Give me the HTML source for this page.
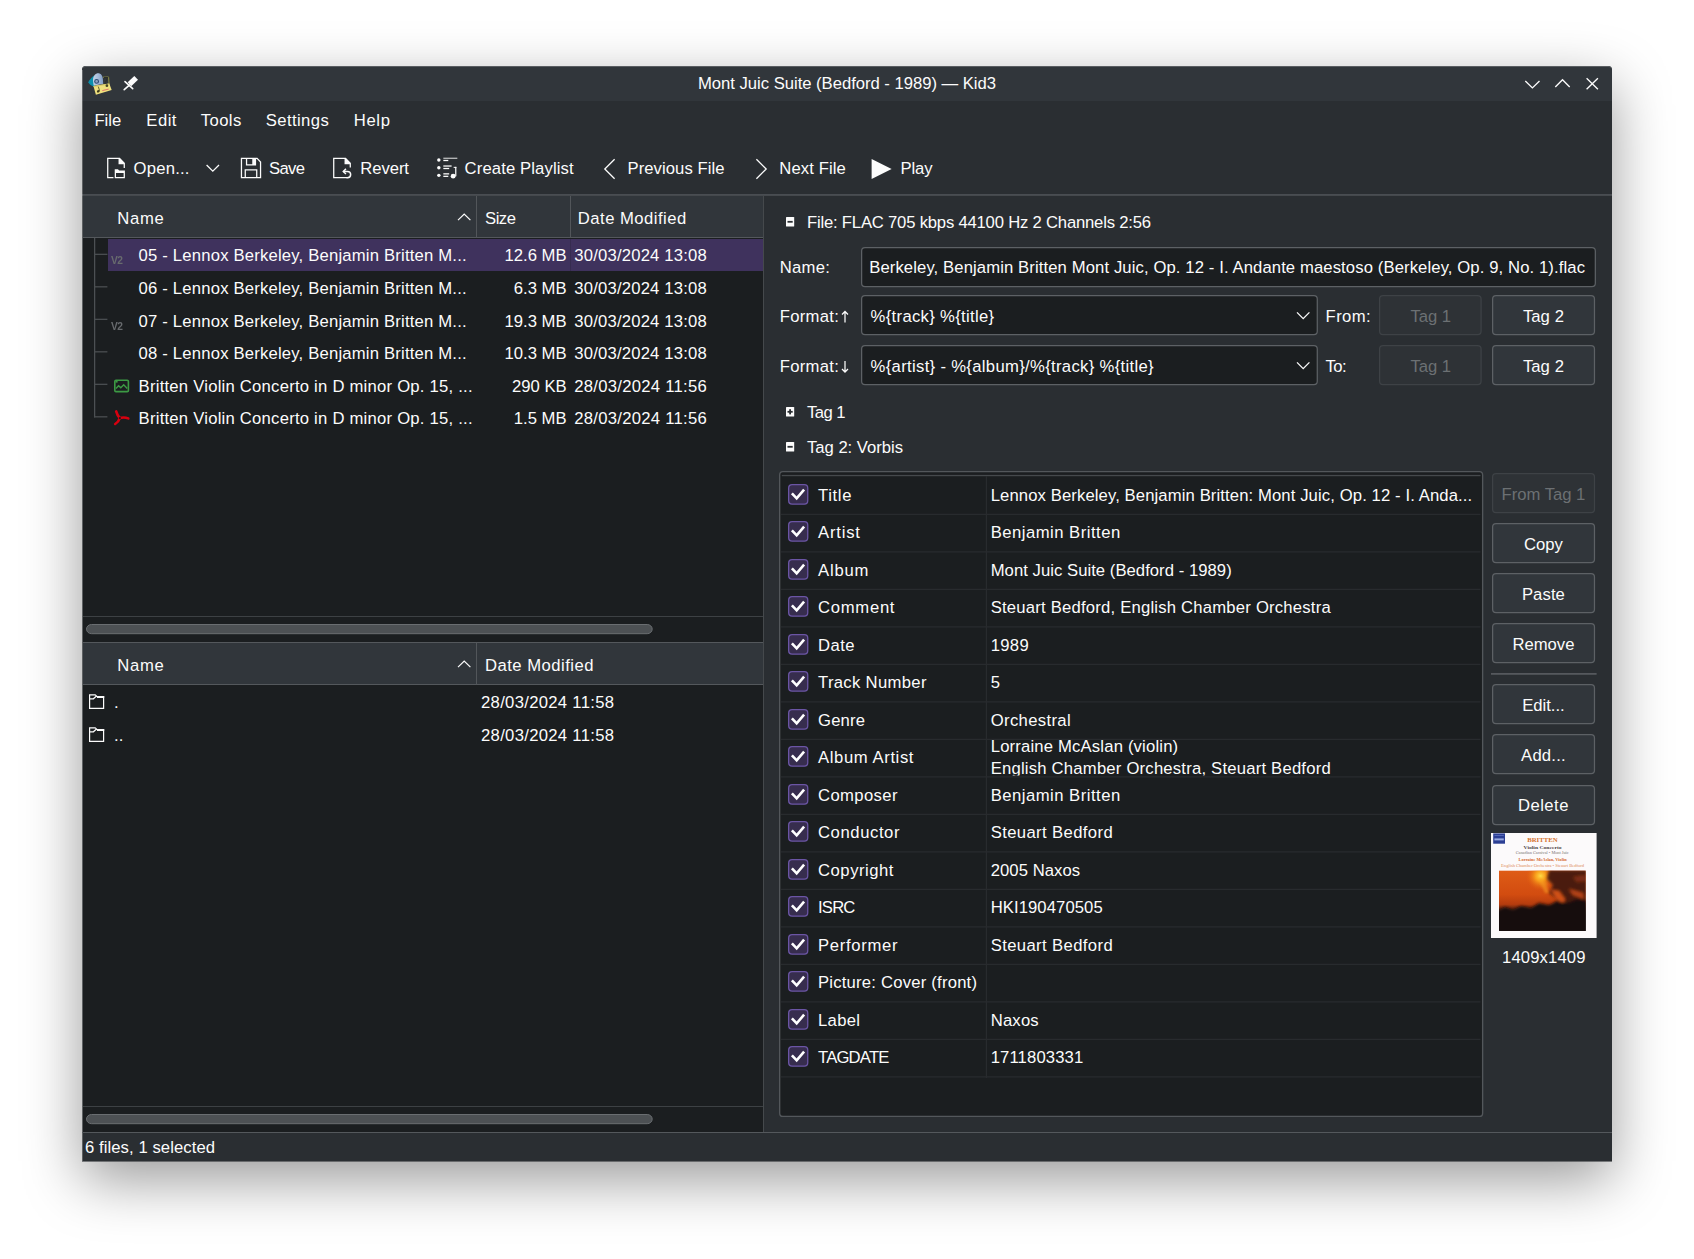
<!DOCTYPE html>
<html lang="en">
<head>
<meta charset="utf-8">
<title>Mont Juic Suite (Bedford - 1989) — Kid3</title>
<style>
*{box-sizing:border-box;margin:0;padding:0}
html,body{width:1694px;height:1259px;overflow:hidden;background:#fff}
body{font-family:"Liberation Sans",sans-serif;font-size:16.67px;color:#fcfcfc;position:relative;-webkit-font-smoothing:antialiased}
.abs{position:absolute}
.t{position:absolute;white-space:nowrap;line-height:20px;height:20px}
#win{position:absolute;left:82px;top:66px;width:1530px;height:1095px;background:#2a2e32;border-radius:4px 4px 0 0;box-shadow:0 19px 57px rgba(0,0,0,.4)}
#titlebar{position:absolute;left:0;top:0;width:1530px;height:35px;background:#31363b;border-radius:4px 4px 0 0}
#title{position:absolute;left:0;width:1530px;top:8px;text-align:center;line-height:20px}
.hline{position:absolute;height:1px;background:#52565a}
.vline{position:absolute;width:1px;background:#52565a}
.view{position:absolute;background:#1b1e20}
.hdr{position:absolute;background:#31363b;border-bottom:1px solid #54585c}
.sb{position:absolute;height:9px;border-radius:5px;background:#505457}
.row-sel{position:absolute;background:#3f325d}
.btn{position:absolute;border:1px solid #5c6064;border-radius:4px;background:#31363b;text-align:center;line-height:38px;height:40px;width:104px}
.t.dis{color:#6c7073}
.inp{position:absolute;border:1px solid #5c6064;border-radius:4px;background:#1b1e20;height:40px;line-height:38px;padding-left:8px;white-space:nowrap;overflow:hidden}
.cb{position:absolute;width:20px;height:20px;border:1px solid #8c6bc2;border-radius:3px;background:#3f325d}
.cb svg{position:absolute;left:0;top:0}
.rl{position:absolute;left:0;height:1px;background:#26292c}
svg{display:block;overflow:visible}
</style>
</head>
<body>
<div id="win">
<div id="titlebar"><div style="position:absolute;left:0;top:0;width:1530px;height:4px;border-radius:4px 4px 0 0;border-top:1px solid rgba(255,255,255,.2)"></div>
<div class="t " style="left:615.00px;width:300px;text-align:center;top:8.00px;letter-spacing:-0.028px;">Mont Juic Suite (Bedford - 1989) — Kid3</div>
</div>
<svg class="abs" style="left:3.00px;top:2.00px;" width="32" height="32" viewBox="0 0 32 32">
<defs><linearGradient id="dm" x1="0" y1="0" x2="1" y2="0"><stop offset="0" stop-color="#c6d4e8"/><stop offset=".45" stop-color="#a9bedb"/><stop offset="1" stop-color="#7f9bc3"/></linearGradient></defs>
<path d="M3.4 14.2 Q3.6 12.6 8.8 7.6 L10.4 18.8 Q5 17.8 3.4 14.2 Z" fill="#0b8fac"/>
<path d="M8 12.5 C8 3.4 17.6 2.6 17.9 11.5 L18.2 16 L8.6 17.6 Z" fill="url(#dm)"/>
<circle cx="11.6" cy="13.4" r="1.9" fill="#8fa3c0" stroke="#2d4a76" stroke-width="1.1"/>
<path d="M18 9.2 L23.6 9 L24 15.4" fill="none" stroke="#8e8e45" stroke-width="1"/>
<path d="M19 9.6 L22.6 9.6 L20.4 14.6" fill="none" stroke="#2c2f2a" stroke-width="1.1"/>
<path d="M8.4 17.9 L24.3 15.4 L26.7 21.9 L10.9 26.7 Z" fill="#efe07d"/>
<path d="M8.4 17.9 L24.3 15.4 L24.7 16.4 L8.8 19 Z" fill="#d8ca6a"/>
<circle cx="21.9" cy="17.7" r="1.35" fill="#4a4822"/>
<ellipse cx="13.3" cy="23.3" rx="1.5" ry="1.2" fill="#3a381a" transform="rotate(-30 13.3 23.3)"/>
<path d="M13.3 18.6 L14.6 22.8" stroke="#5a5628" stroke-width=".9" fill="none"/>
<path d="M17.3 22.6 L23.7 21.1" stroke="#e2766a" stroke-width="1" fill="none"/>
</svg>
<svg class="abs" style="left:40.00px;top:8.00px;" width="18" height="18" viewBox="0 0 18 18">
<path d="M12.3 2 L16 5.7 L9.2 12.3 L5.7 8.2 Z" fill="#fcfcfc"/>
<path d="M3 7.6 L10.7 14.6" stroke="#fcfcfc" stroke-width="1.6" stroke-linecap="round" fill="none"/>
<path d="M7.4 11.1 L2.2 15.7" stroke="#fcfcfc" stroke-width="1.6" stroke-linecap="round" fill="none"/>
</svg>
<svg class="abs" style="left:1438.00px;top:6.00px;" width="90" height="24" viewBox="0 0 90 24">
<g fill="none" stroke="#fcfcfc" stroke-width="1.35">
<path d="M5.3 8.9 L12.4 15.9 L19.5 8.9"/>
<path d="M35.3 14.9 L42.5 7.7 L49.7 14.9"/>
<path d="M66.6 6.3 L77.9 17.2 M77.9 6.3 L66.6 17.2"/>
</g></svg>
<div class="t " style="left:12.40px;top:45.00px;letter-spacing:0.052px;">File</div>
<div class="t " style="left:64.30px;top:45.00px;letter-spacing:0.499px;">Edit</div>
<div class="t " style="left:118.70px;top:45.00px;letter-spacing:0.427px;">Tools</div>
<div class="t " style="left:183.70px;top:45.00px;letter-spacing:0.416px;">Settings</div>
<div class="t " style="left:271.70px;top:45.00px;letter-spacing:0.678px;">Help</div>
<svg class="abs" style="left:20.30px;top:88.30px;" width="28" height="28" viewBox="0 0 22 22">
<path d="M4 3 V19 H9 V18 H5 V4 H13 V8 H17 V11 H18 V7 L14 3 Z" fill="#fcfcfc"/>
<path d="M10 12 V19 H18 V13 H13.5 L12.5 12 Z M11 15 H17 V18 H11 Z" fill="#fcfcfc" fill-rule="evenodd"/></svg>
<div class="t " style="left:51.50px;top:93.00px;letter-spacing:0.227px;">Open...</div>
<svg class="abs" style="left:122.00px;top:94.00px;" width="18" height="16" viewBox="0 0 18 16"><path d="M2.6 5 L8.8 11.2 L15 5" fill="none" stroke="#fcfcfc" stroke-width="1.3"/></svg>
<svg class="abs" style="left:154.50px;top:88.10px;" width="28" height="28" viewBox="0 0 22 22">
<path d="M3 3 V19 H19 V6 L16 3 Z M4 4 H7 V9 H15 V4 H15.6 L18 6.4 V18 H16 V12 H6 V18 H4 Z M8 4 H12 V8 H8 Z M7 13 H15 V18 H7 Z" fill="#fcfcfc" fill-rule="evenodd"/></svg>
<div class="t " style="left:187.00px;top:93.00px;letter-spacing:-0.656px;">Save</div>
<svg class="abs" style="left:245.70px;top:88.30px;" width="28" height="28" viewBox="0 0 22 22">
<path d="M4 3 V19 H15 V18 H5 V4 H13 V8 H17 V10.6 H18 V7 L14 3 Z" fill="#fcfcfc"/>
<path d="M12 13.7 H15.3 A2.5 2.5 0 0 1 15.3 18.7 H14.6" fill="none" stroke="#fcfcfc" stroke-width="1.15"/>
<path d="M14.1 11.7 L12 13.7 L14.1 15.7" fill="none" stroke="#fcfcfc" stroke-width="1.15"/></svg>
<div class="t " style="left:278.30px;top:93.00px;letter-spacing:-0.072px;">Revert</div>
<svg class="abs" style="left:349.80px;top:88.10px;" width="28" height="28" viewBox="0 0 22 22">
<g fill="#fcfcfc"><circle cx="5.37" cy="4.7" r="1.35"/><circle cx="5.37" cy="10.74" r="1.35"/><circle cx="5.37" cy="16.78" r="1.35"/>
<rect x="8.9" y="2.95" width="11" height=".7"/><rect x="8.9" y="4.6" width="3.9" height="1"/>
<rect x="8.9" y="8.95" width="6.5" height="1"/><rect x="8.9" y="10.9" width="4.6" height="1"/>
<rect x="8.9" y="15.1" width="4.6" height="1"/><rect x="8.9" y="17.05" width="3.9" height="1"/>
<circle cx="16.6" cy="17.4" r="1.9"/><rect x="18.2" y="10.1" width=".95" height="7.4"/><rect x="17" y="10.1" width="2.15" height=".8"/></g></svg>
<div class="t " style="left:382.60px;top:93.00px;letter-spacing:0.115px;">Create Playlist</div>
<svg class="abs" style="left:518.00px;top:88.50px;" width="20" height="28" viewBox="0 0 20 28"><path d="M14.6 4.2 L4.8 14 L14.6 23.8" fill="none" stroke="#fcfcfc" stroke-width="1.3"/></svg>
<div class="t " style="left:545.50px;top:93.00px;letter-spacing:0.060px;">Previous File</div>
<svg class="abs" style="left:670.00px;top:88.50px;" width="20" height="28" viewBox="0 0 20 28"><path d="M4.4 4.2 L14.2 14 L4.4 23.8" fill="none" stroke="#fcfcfc" stroke-width="1.3"/></svg>
<div class="t " style="left:697.30px;top:93.00px;letter-spacing:0.098px;">Next File</div>
<svg class="abs" style="left:786.00px;top:88.50px;" width="28" height="28" viewBox="0 0 28 28"><path d="M3.6 3.9 L23.6 14 L3.6 24.1 Z" fill="#fcfcfc"/></svg>
<div class="t " style="left:818.50px;top:93.00px;letter-spacing:-0.135px;">Play</div>
<svg class="abs" style="left:0.00px;top:127.00px;" width="1530" height="4" viewBox="0 0 1530 4"><rect x="0" y="1.3" width="1530" height="1.3" fill="#585c60"/></svg>
<div class="view" style="left:1.00px;top:172.00px;width:680.50px;height:378.00px;"></div>
<div class="hdr" style="left:1.00px;top:129.50px;width:680.50px;height:42.50px;"></div>
<div class="vline" style="left:394.00px;top:130.00px;width:1.00px;height:41.50px;"></div>
<div class="vline" style="left:487.50px;top:130.00px;width:1.00px;height:41.50px;"></div>
<div class="t " style="left:35.30px;top:143.00px;letter-spacing:0.688px;">Name</div>
<div class="t " style="left:403.00px;top:143.00px;letter-spacing:-0.469px;">Size</div>
<div class="t " style="left:495.80px;top:143.00px;letter-spacing:0.477px;">Date Modified</div>
<svg class="abs" style="left:374.60px;top:146.40px;" width="15" height="10" viewBox="0 0 15 10"><path d="M1 8.2 L7.2 2 L13.4 8.2" fill="none" stroke="#fcfcfc" stroke-width="1.2"/></svg>
<div class="row-sel" style="left:25.50px;top:173.00px;width:655.50px;height:32.00px;"></div>
<div class="vline" style="left:487.50px;top:173.00px;width:1.00px;height:32.00px;background:#362c50"></div>
<div class="t " style="left:56.60px;top:180.00px;letter-spacing:0.190px;">05 - Lennox Berkeley, Benjamin Britten M...</div>
<div class="t " style="right:1045.40px;top:180.00px;">12.6 MB</div>
<div class="t " style="left:492.30px;top:180.00px;letter-spacing:0.189px;">30/03/2024 13:08</div>
<div class="abs" style="left:29.40px;top:187.00px;font-size:11.6px;line-height:14px;font-weight:bold;color:#686b6e;letter-spacing:-0.6px;transform:scaleX(.88);transform-origin:0 0">V2</div>
<div class="t " style="left:56.60px;top:213.00px;letter-spacing:0.190px;">06 - Lennox Berkeley, Benjamin Britten M...</div>
<div class="t " style="right:1045.40px;top:213.00px;">6.3 MB</div>
<div class="t " style="left:492.30px;top:213.00px;letter-spacing:0.189px;">30/03/2024 13:08</div>
<div class="t " style="left:56.60px;top:246.00px;letter-spacing:0.190px;">07 - Lennox Berkeley, Benjamin Britten M...</div>
<div class="t " style="right:1045.40px;top:246.00px;">19.3 MB</div>
<div class="t " style="left:492.30px;top:246.00px;letter-spacing:0.189px;">30/03/2024 13:08</div>
<div class="abs" style="left:29.40px;top:253.00px;font-size:11.6px;line-height:14px;font-weight:bold;color:#686b6e;letter-spacing:-0.6px;transform:scaleX(.88);transform-origin:0 0">V2</div>
<div class="t " style="left:56.60px;top:278.00px;letter-spacing:0.190px;">08 - Lennox Berkeley, Benjamin Britten M...</div>
<div class="t " style="right:1045.40px;top:278.00px;">10.3 MB</div>
<div class="t " style="left:492.30px;top:278.00px;letter-spacing:0.189px;">30/03/2024 13:08</div>
<div class="t " style="left:56.60px;top:311.00px;letter-spacing:0.228px;">Britten Violin Concerto in D minor Op. 15, ...</div>
<div class="t " style="right:1045.40px;top:311.00px;">290 KB</div>
<div class="t " style="left:492.30px;top:311.00px;letter-spacing:0.271px;">28/03/2024 11:56</div>
<svg class="abs" style="left:26.00px;top:306.00px;" width="28" height="28" viewBox="0 0 28 28"><rect x="6.8" y="8.2" width="13.6" height="11.4" rx="1.2" fill="none" stroke="#3c9a44" stroke-width="1.6"/><path d="M8 16.4 L10.6 13.7 L12.8 15.7 L15.7 12.8 L19.2 16.4" fill="none" stroke="#3c9a44" stroke-width="1.5"/><rect x="7.6" y="9" width="2" height="1.6" fill="#3c9a44"/></svg>
<div class="t " style="left:56.60px;top:343.00px;letter-spacing:0.228px;">Britten Violin Concerto in D minor Op. 15, ...</div>
<div class="t " style="right:1045.40px;top:343.00px;">1.5 MB</div>
<div class="t " style="left:492.30px;top:343.00px;letter-spacing:0.271px;">28/03/2024 11:56</div>
<svg class="abs" style="left:26.00px;top:306.00px;" width="28" height="60" viewBox="0 0 28 60"><g fill="none" stroke="#d8000f" stroke-linecap="round"><path d="M8.2 39.4 C9 42.5 10.4 44.6 11.8 46.1" stroke-width="2.6"/><path d="M11.8 46.1 C14.5 45.2 17.5 45.3 20.3 46.4" stroke-width="2.6"/><path d="M11.8 46.1 C11 48.6 9.4 50.6 7.2 52" stroke-width="2.6"/></g><circle cx="11.9" cy="46.1" r="1.1" fill="#1b1e20"/></svg>
<svg class="abs" style="left:0.30px;top:172.00px;" width="30" height="182" viewBox="0 0 30 182"><g fill="#4c5053"><rect x="12.0" y="0" width="1.25" height="179.4"/><rect x="12.0" y="15.70" width="13.4" height="1.25"/><rect x="12.0" y="48.20" width="13.4" height="1.25"/><rect x="12.0" y="80.70" width="13.4" height="1.25"/><rect x="12.0" y="113.20" width="13.4" height="1.25"/><rect x="12.0" y="145.70" width="13.4" height="1.25"/><rect x="12.0" y="178.20" width="13.4" height="1.25"/></g></svg>
<div class="abs" style="left:1.00px;top:550.00px;width:680.50px;height:26.50px;background:#1b1e20;border-top:1px solid #3d4144"></div>
<svg class="abs" style="left:2.20px;top:556.20px" width="570.70" height="14.20"><rect x="2.500" y="2.500" width="565.700" height="9.200" rx="5" fill="#4d5154" stroke="#6a6e71" stroke-width="1"/></svg>
<div class="view" style="left:1.00px;top:619.00px;width:680.50px;height:421.00px;"></div>
<div class="hdr" style="left:1.00px;top:576.00px;width:680.50px;height:43.00px;border-top:1px solid #54585c"></div>
<div class="vline" style="left:394.00px;top:577.00px;width:1.00px;height:41.50px;"></div>
<div class="t " style="left:35.30px;top:590.00px;letter-spacing:0.688px;">Name</div>
<div class="t " style="left:403.00px;top:590.00px;letter-spacing:0.477px;">Date Modified</div>
<svg class="abs" style="left:374.60px;top:592.90px;" width="15" height="10" viewBox="0 0 15 10"><path d="M1 8.2 L7.2 2 L13.4 8.2" fill="none" stroke="#fcfcfc" stroke-width="1.2"/></svg>
<svg class="abs" style="left:6.60px;top:628.20px;" width="16" height="15" viewBox="0 0 16 15"><path d="M.6 14.4 V.8 H6.2 L8.2 2.6 H14.6 V14.4 Z M.6 4.8 H4.4 L7.2 2.2" fill="none" stroke="#fcfcfc" stroke-width="1.2"/><rect x="8" y="2" width="7.2" height="2" fill="#fcfcfc"/></svg>
<div class="t " style="left:32.00px;top:627.00px;">.</div>
<div class="t " style="left:399.00px;top:627.00px;letter-spacing:0.304px;">28/03/2024 11:58</div>
<svg class="abs" style="left:6.60px;top:660.90px;" width="16" height="15" viewBox="0 0 16 15"><path d="M.6 14.4 V.8 H6.2 L8.2 2.6 H14.6 V14.4 Z M.6 4.8 H4.4 L7.2 2.2" fill="none" stroke="#fcfcfc" stroke-width="1.2"/><rect x="8" y="2" width="7.2" height="2" fill="#fcfcfc"/></svg>
<div class="t " style="left:32.00px;top:660.00px;">..</div>
<div class="t " style="left:399.00px;top:660.00px;letter-spacing:0.304px;">28/03/2024 11:58</div>
<div class="abs" style="left:1.00px;top:1039.50px;width:680.50px;height:26.50px;background:#1b1e20;border-top:1px solid #3d4144"></div>
<svg class="abs" style="left:2.20px;top:1046.40px" width="570.70" height="14.20"><rect x="2.500" y="2.500" width="565.700" height="9.200" rx="5" fill="#4d5154" stroke="#6a6e71" stroke-width="1"/></svg>
<div class="vline" style="left:681.00px;top:129.50px;width:1.00px;height:936.50px;background:#45494c"></div>
<div class="vline" style="left:0.00px;top:4.00px;width:1.00px;height:1091.00px;background:rgba(215,215,215,.3)"></div>
<svg class="abs" style="left:703.80px;top:151.30px;" width="8.2" height="9.6" viewBox="0 0 8.2 9.6"><rect x="0" y="0" width="8.2" height="9.6" rx=".6" fill="#fcfcfc"/><rect x="1.5" y="3.9" width="5.2" height="1.8" fill="#2a2e32"/></svg>
<div class="t " style="left:725.00px;top:147.00px;letter-spacing:-0.204px;">File: FLAC 705 kbps 44100 Hz 2 Channels 2:56</div>
<div class="t " style="left:697.80px;top:192.00px;letter-spacing:0.234px;">Name:</div>
<svg class="abs" style="left:777.30px;top:178.50px" width="738.95" height="44.30"><rect x="2.625" y="2.625" width="733.700" height="39.050" rx="3.4" fill="#1b1e20" stroke="#5d6165" stroke-width="1.25"/></svg>
<div class="t " style="left:787.20px;top:192.00px;letter-spacing:0.106px;">Berkeley, Benjamin Britten Mont Juic, Op. 12 - I. Andante maestoso (Berkeley, Op. 9, No. 1).flac</div>
<div class="t " style="left:697.80px;top:241.00px;letter-spacing:0.268px;">Format:</div>
<svg class="abs" style="left:759.20px;top:243.50px;" width="8" height="14" viewBox="0 0 8 14"><path d="M4 12.5 V1.5 M1 4.5 L4 1.5 L7 4.5" fill="none" stroke="#fcfcfc" stroke-width="1.25"/></svg>
<svg class="abs" style="left:777.30px;top:227.30px" width="460.90" height="44.30"><rect x="2.625" y="2.625" width="455.650" height="39.050" rx="3.4" fill="#1b1e20" stroke="#5d6165" stroke-width="1.25"/></svg>
<div class="t " style="left:788.60px;top:241.00px;letter-spacing:0.312px;">%{track} %{title}</div>
<svg class="abs" style="left:1214.00px;top:244.50px;" width="15" height="9" viewBox="0 0 15 9"><path d="M1 1.4 L7.2 7.6 L13.4 1.4" fill="none" stroke="#fcfcfc" stroke-width="1.3"/></svg>
<div class="t " style="left:1243.60px;top:241.00px;letter-spacing:0.375px;">From:</div>
<svg class="abs" style="left:1295.40px;top:227.30px" width="106.70" height="44.30"><rect x="2.625" y="2.625" width="101.450" height="39.050" rx="3.4" fill="#2e3236" stroke="#3e4246" stroke-width="1.25"/></svg><div class="t dis" style="left:1198.75px;width:300px;text-align:center;top:241.00px;letter-spacing:-0.062px;">Tag 1</div>
<svg class="abs" style="left:1407.90px;top:227.30px" width="107.10" height="44.30"><rect x="2.625" y="2.625" width="101.850" height="39.050" rx="3.4" fill="#31363b" stroke="#5d6165" stroke-width="1.25"/></svg><div class="t " style="left:1311.45px;width:300px;text-align:center;top:241.00px;letter-spacing:0.062px;">Tag 2</div>
<div class="t " style="left:697.80px;top:291.00px;letter-spacing:0.268px;">Format:</div>
<svg class="abs" style="left:759.20px;top:293.50px;" width="8" height="14" viewBox="0 0 8 14"><path d="M4 1 V12 M1 9 L4 12 L7 9" fill="none" stroke="#fcfcfc" stroke-width="1.25"/></svg>
<svg class="abs" style="left:777.30px;top:277.30px" width="460.90" height="44.30"><rect x="2.625" y="2.625" width="455.650" height="39.050" rx="3.4" fill="#1b1e20" stroke="#5d6165" stroke-width="1.25"/></svg>
<div class="t " style="left:788.60px;top:291.00px;letter-spacing:0.317px;">%{artist} - %{album}/%{track} %{title}</div>
<svg class="abs" style="left:1214.00px;top:294.50px;" width="15" height="9" viewBox="0 0 15 9"><path d="M1 1.4 L7.2 7.6 L13.4 1.4" fill="none" stroke="#fcfcfc" stroke-width="1.3"/></svg>
<div class="t " style="left:1243.60px;top:291.00px;letter-spacing:-0.609px;">To:</div>
<svg class="abs" style="left:1295.40px;top:277.30px" width="106.70" height="44.30"><rect x="2.625" y="2.625" width="101.450" height="39.050" rx="3.4" fill="#2e3236" stroke="#3e4246" stroke-width="1.25"/></svg><div class="t dis" style="left:1198.75px;width:300px;text-align:center;top:291.00px;letter-spacing:-0.062px;">Tag 1</div>
<svg class="abs" style="left:1407.90px;top:277.30px" width="107.10" height="44.30"><rect x="2.625" y="2.625" width="101.850" height="39.050" rx="3.4" fill="#31363b" stroke="#5d6165" stroke-width="1.25"/></svg><div class="t " style="left:1311.45px;width:300px;text-align:center;top:291.00px;letter-spacing:0.062px;">Tag 2</div>
<svg class="abs" style="left:703.80px;top:341.30px;" width="8.2" height="9.6" viewBox="0 0 8.2 9.6"><rect x="0" y="0" width="8.2" height="9.6" rx=".6" fill="#fcfcfc"/><rect x="1.5" y="3.9" width="5.2" height="1.8" fill="#2a2e32"/><rect x="3.2" y="2.2" width="1.8" height="5.2" fill="#2a2e32"/></svg>
<div class="t " style="left:725.00px;top:337.00px;letter-spacing:-0.562px;">Tag 1</div>
<svg class="abs" style="left:703.80px;top:376.30px;" width="8.2" height="9.6" viewBox="0 0 8.2 9.6"><rect x="0" y="0" width="8.2" height="9.6" rx=".6" fill="#fcfcfc"/><rect x="1.5" y="3.9" width="5.2" height="1.8" fill="#2a2e32"/></svg>
<div class="t " style="left:725.00px;top:372.00px;letter-spacing:-0.025px;">Tag 2: Vorbis</div>
<svg class="abs" style="left:695.00px;top:403.00px" width="708.30" height="650.10"><rect x="2.675" y="2.675" width="702.950" height="644.750" rx="3.2" fill="#1b1e20" stroke="#53575b" stroke-width="1.35"/></svg>
<svg class="abs" style="left:699.00px;top:409.60px;" width="700" height="603" viewBox="0 0 700 603"><g fill="#282b2e"><rect x="0.8" y="-1.1" width="698.7" height="1.3" fill="#45494c"/><rect x="204.8" y="0" width="1.25" height="602"/><rect x="0" y="37.75" width="699.5" height="1.25"/><rect x="0" y="75.25" width="699.5" height="1.25"/><rect x="0" y="112.75" width="699.5" height="1.25"/><rect x="0" y="150.25" width="699.5" height="1.25"/><rect x="0" y="187.75" width="699.5" height="1.25"/><rect x="0" y="225.25" width="699.5" height="1.25"/><rect x="0" y="262.75" width="699.5" height="1.25"/><rect x="0" y="300.25" width="699.5" height="1.25"/><rect x="0" y="337.75" width="699.5" height="1.25"/><rect x="0" y="375.25" width="699.5" height="1.25"/><rect x="0" y="412.75" width="699.5" height="1.25"/><rect x="0" y="450.25" width="699.5" height="1.25"/><rect x="0" y="487.75" width="699.5" height="1.25"/><rect x="0" y="525.25" width="699.5" height="1.25"/><rect x="0" y="562.75" width="699.5" height="1.25"/><rect x="0" y="600.25" width="699.5" height="1.25"/></g></svg>
<svg class="abs" style="left:705.90px;top:417.70px;" width="20.4" height="20.8" viewBox="0 0 20.4 20.8"><rect x=".65" y=".65" width="19.1" height="19.5" rx="3.4" fill="#372d4e" stroke="#6b55a5" stroke-width="1.3"/><path d="M3.9 9.3 L8.7 14.4 L16.1 5.7" fill="none" stroke="#fff" stroke-width="2.6"/></svg>
<div class="t " style="left:736.00px;top:420.00px;letter-spacing:0.660px;">Title</div>
<div class="t " style="left:908.70px;top:420.00px;letter-spacing:0.107px;">Lennox Berkeley, Benjamin Britten: Mont Juic, Op. 12 - I. Anda...</div>
<svg class="abs" style="left:705.90px;top:455.20px;" width="20.4" height="20.8" viewBox="0 0 20.4 20.8"><rect x=".65" y=".65" width="19.1" height="19.5" rx="3.4" fill="#372d4e" stroke="#6b55a5" stroke-width="1.3"/><path d="M3.9 9.3 L8.7 14.4 L16.1 5.7" fill="none" stroke="#fff" stroke-width="2.6"/></svg>
<div class="t " style="left:736.00px;top:457.00px;letter-spacing:0.809px;">Artist</div>
<div class="t " style="left:908.70px;top:457.00px;letter-spacing:0.485px;">Benjamin Britten</div>
<svg class="abs" style="left:705.90px;top:492.70px;" width="20.4" height="20.8" viewBox="0 0 20.4 20.8"><rect x=".65" y=".65" width="19.1" height="19.5" rx="3.4" fill="#372d4e" stroke="#6b55a5" stroke-width="1.3"/><path d="M3.9 9.3 L8.7 14.4 L16.1 5.7" fill="none" stroke="#fff" stroke-width="2.6"/></svg>
<div class="t " style="left:736.00px;top:495.00px;letter-spacing:0.820px;">Album</div>
<div class="t " style="left:908.70px;top:495.00px;letter-spacing:0.039px;">Mont Juic Suite (Bedford - 1989)</div>
<svg class="abs" style="left:705.90px;top:530.20px;" width="20.4" height="20.8" viewBox="0 0 20.4 20.8"><rect x=".65" y=".65" width="19.1" height="19.5" rx="3.4" fill="#372d4e" stroke="#6b55a5" stroke-width="1.3"/><path d="M3.9 9.3 L8.7 14.4 L16.1 5.7" fill="none" stroke="#fff" stroke-width="2.6"/></svg>
<div class="t " style="left:736.00px;top:532.00px;letter-spacing:0.716px;">Comment</div>
<div class="t " style="left:908.70px;top:532.00px;letter-spacing:0.209px;">Steuart Bedford, English Chamber Orchestra</div>
<svg class="abs" style="left:705.90px;top:567.70px;" width="20.4" height="20.8" viewBox="0 0 20.4 20.8"><rect x=".65" y=".65" width="19.1" height="19.5" rx="3.4" fill="#372d4e" stroke="#6b55a5" stroke-width="1.3"/><path d="M3.9 9.3 L8.7 14.4 L16.1 5.7" fill="none" stroke="#fff" stroke-width="2.6"/></svg>
<div class="t " style="left:736.00px;top:570.00px;letter-spacing:0.438px;">Date</div>
<div class="t " style="left:908.70px;top:570.00px;letter-spacing:0.312px;">1989</div>
<svg class="abs" style="left:705.90px;top:605.20px;" width="20.4" height="20.8" viewBox="0 0 20.4 20.8"><rect x=".65" y=".65" width="19.1" height="19.5" rx="3.4" fill="#372d4e" stroke="#6b55a5" stroke-width="1.3"/><path d="M3.9 9.3 L8.7 14.4 L16.1 5.7" fill="none" stroke="#fff" stroke-width="2.6"/></svg>
<div class="t " style="left:736.00px;top:607.00px;letter-spacing:0.328px;">Track Number</div>
<div class="t " style="left:908.70px;top:607.00px;letter-spacing:0.234px;">5</div>
<svg class="abs" style="left:705.90px;top:642.70px;" width="20.4" height="20.8" viewBox="0 0 20.4 20.8"><rect x=".65" y=".65" width="19.1" height="19.5" rx="3.4" fill="#372d4e" stroke="#6b55a5" stroke-width="1.3"/><path d="M3.9 9.3 L8.7 14.4 L16.1 5.7" fill="none" stroke="#fff" stroke-width="2.6"/></svg>
<div class="t " style="left:736.00px;top:645.00px;letter-spacing:0.176px;">Genre</div>
<div class="t " style="left:908.70px;top:645.00px;letter-spacing:0.352px;">Orchestral</div>
<svg class="abs" style="left:705.90px;top:680.20px;" width="20.4" height="20.8" viewBox="0 0 20.4 20.8"><rect x=".65" y=".65" width="19.1" height="19.5" rx="3.4" fill="#372d4e" stroke="#6b55a5" stroke-width="1.3"/><path d="M3.9 9.3 L8.7 14.4 L16.1 5.7" fill="none" stroke="#fff" stroke-width="2.6"/></svg>
<div class="t " style="left:736.00px;top:682.00px;letter-spacing:0.602px;">Album Artist</div>
<div class="t " style="left:908.70px;top:671.00px;letter-spacing:0.175px;">Lorraine McAslan (violin)</div>
<div class="t " style="left:908.70px;top:693.00px;clip-path:inset(0 0 3.6px 0);letter-spacing:0.209px;">English Chamber Orchestra, Steuart Bedford</div>
<svg class="abs" style="left:705.90px;top:717.70px;" width="20.4" height="20.8" viewBox="0 0 20.4 20.8"><rect x=".65" y=".65" width="19.1" height="19.5" rx="3.4" fill="#372d4e" stroke="#6b55a5" stroke-width="1.3"/><path d="M3.9 9.3 L8.7 14.4 L16.1 5.7" fill="none" stroke="#fff" stroke-width="2.6"/></svg>
<div class="t " style="left:736.00px;top:720.00px;letter-spacing:0.379px;">Composer</div>
<div class="t " style="left:908.70px;top:720.00px;letter-spacing:0.485px;">Benjamin Britten</div>
<svg class="abs" style="left:705.90px;top:755.20px;" width="20.4" height="20.8" viewBox="0 0 20.4 20.8"><rect x=".65" y=".65" width="19.1" height="19.5" rx="3.4" fill="#372d4e" stroke="#6b55a5" stroke-width="1.3"/><path d="M3.9 9.3 L8.7 14.4 L16.1 5.7" fill="none" stroke="#fff" stroke-width="2.6"/></svg>
<div class="t " style="left:736.00px;top:757.00px;letter-spacing:0.580px;">Conductor</div>
<div class="t " style="left:908.70px;top:757.00px;letter-spacing:0.381px;">Steuart Bedford</div>
<svg class="abs" style="left:705.90px;top:792.70px;" width="20.4" height="20.8" viewBox="0 0 20.4 20.8"><rect x=".65" y=".65" width="19.1" height="19.5" rx="3.4" fill="#372d4e" stroke="#6b55a5" stroke-width="1.3"/><path d="M3.9 9.3 L8.7 14.4 L16.1 5.7" fill="none" stroke="#fff" stroke-width="2.6"/></svg>
<div class="t " style="left:736.00px;top:795.00px;letter-spacing:0.525px;">Copyright</div>
<div class="t " style="left:908.70px;top:795.00px;letter-spacing:0.066px;">2005 Naxos</div>
<svg class="abs" style="left:705.90px;top:830.20px;" width="20.4" height="20.8" viewBox="0 0 20.4 20.8"><rect x=".65" y=".65" width="19.1" height="19.5" rx="3.4" fill="#372d4e" stroke="#6b55a5" stroke-width="1.3"/><path d="M3.9 9.3 L8.7 14.4 L16.1 5.7" fill="none" stroke="#fff" stroke-width="2.6"/></svg>
<div class="t " style="left:736.00px;top:832.00px;letter-spacing:-0.800px;">ISRC</div>
<div class="t " style="left:908.70px;top:832.00px;letter-spacing:0.078px;">HKI190470505</div>
<svg class="abs" style="left:705.90px;top:867.70px;" width="20.4" height="20.8" viewBox="0 0 20.4 20.8"><rect x=".65" y=".65" width="19.1" height="19.5" rx="3.4" fill="#372d4e" stroke="#6b55a5" stroke-width="1.3"/><path d="M3.9 9.3 L8.7 14.4 L16.1 5.7" fill="none" stroke="#fff" stroke-width="2.6"/></svg>
<div class="t " style="left:736.00px;top:870.00px;letter-spacing:0.682px;">Performer</div>
<div class="t " style="left:908.70px;top:870.00px;letter-spacing:0.381px;">Steuart Bedford</div>
<svg class="abs" style="left:705.90px;top:905.20px;" width="20.4" height="20.8" viewBox="0 0 20.4 20.8"><rect x=".65" y=".65" width="19.1" height="19.5" rx="3.4" fill="#372d4e" stroke="#6b55a5" stroke-width="1.3"/><path d="M3.9 9.3 L8.7 14.4 L16.1 5.7" fill="none" stroke="#fff" stroke-width="2.6"/></svg>
<div class="t " style="left:736.00px;top:907.00px;letter-spacing:0.211px;">Picture: Cover (front)</div>
<svg class="abs" style="left:705.90px;top:942.70px;" width="20.4" height="20.8" viewBox="0 0 20.4 20.8"><rect x=".65" y=".65" width="19.1" height="19.5" rx="3.4" fill="#372d4e" stroke="#6b55a5" stroke-width="1.3"/><path d="M3.9 9.3 L8.7 14.4 L16.1 5.7" fill="none" stroke="#fff" stroke-width="2.6"/></svg>
<div class="t " style="left:736.00px;top:945.00px;letter-spacing:0.309px;">Label</div>
<div class="t " style="left:908.70px;top:945.00px;letter-spacing:0.195px;">Naxos</div>
<svg class="abs" style="left:705.90px;top:980.20px;" width="20.4" height="20.8" viewBox="0 0 20.4 20.8"><rect x=".65" y=".65" width="19.1" height="19.5" rx="3.4" fill="#372d4e" stroke="#6b55a5" stroke-width="1.3"/><path d="M3.9 9.3 L8.7 14.4 L16.1 5.7" fill="none" stroke="#fff" stroke-width="2.6"/></svg>
<div class="t " style="left:736.00px;top:982.00px;letter-spacing:-0.800px;">TAGDATE</div>
<div class="t " style="left:908.70px;top:982.00px;letter-spacing:0.122px;">1711803331</div>
<svg class="abs" style="left:1407.90px;top:404.90px" width="107.10" height="44.30"><rect x="2.625" y="2.625" width="101.850" height="39.050" rx="3.4" fill="#2e3236" stroke="#3e4246" stroke-width="1.25"/></svg><div class="t dis" style="left:1311.45px;width:300px;text-align:center;top:419.00px;letter-spacing:-0.026px;">From Tag 1</div>
<svg class="abs" style="left:1407.90px;top:454.90px" width="107.10" height="44.30"><rect x="2.625" y="2.625" width="101.850" height="39.050" rx="3.4" fill="#31363b" stroke="#5d6165" stroke-width="1.25"/></svg><div class="t " style="left:1311.45px;width:300px;text-align:center;top:469.00px;letter-spacing:0.036px;">Copy</div>
<svg class="abs" style="left:1407.90px;top:504.90px" width="107.10" height="44.30"><rect x="2.625" y="2.625" width="101.850" height="39.050" rx="3.4" fill="#31363b" stroke="#5d6165" stroke-width="1.25"/></svg><div class="t " style="left:1311.45px;width:300px;text-align:center;top:519.00px;letter-spacing:0.102px;">Paste</div>
<svg class="abs" style="left:1407.90px;top:554.90px" width="107.10" height="44.30"><rect x="2.625" y="2.625" width="101.850" height="39.050" rx="3.4" fill="#31363b" stroke="#5d6165" stroke-width="1.25"/></svg><div class="t " style="left:1311.45px;width:300px;text-align:center;top:569.00px;letter-spacing:-0.006px;">Remove</div>
<svg class="abs" style="left:1407.90px;top:615.80px" width="107.10" height="44.30"><rect x="2.625" y="2.625" width="101.850" height="39.050" rx="3.4" fill="#31363b" stroke="#5d6165" stroke-width="1.25"/></svg><div class="t " style="left:1311.45px;width:300px;text-align:center;top:630.00px;letter-spacing:-0.016px;">Edit...</div>
<svg class="abs" style="left:1407.90px;top:665.90px" width="107.10" height="44.30"><rect x="2.625" y="2.625" width="101.850" height="39.050" rx="3.4" fill="#31363b" stroke="#5d6165" stroke-width="1.25"/></svg><div class="t " style="left:1311.45px;width:300px;text-align:center;top:680.00px;letter-spacing:0.194px;">Add...</div>
<svg class="abs" style="left:1407.90px;top:716.50px" width="107.10" height="44.30"><rect x="2.625" y="2.625" width="101.850" height="39.050" rx="3.4" fill="#31363b" stroke="#5d6165" stroke-width="1.25"/></svg><div class="t " style="left:1311.45px;width:300px;text-align:center;top:730.00px;letter-spacing:0.469px;">Delete</div>
<svg class="abs" style="left:1409.00px;top:606.00px;" width="106" height="4" viewBox="0 0 106 4"><rect x="0" y="1.1" width="105.6" height="1.6" fill="#5a5e62"/></svg>
<svg class="abs" style="left:1409.10px;top:767.10px;" width="105.6" height="105" viewBox="0 0 105.6 105">
<defs>
<linearGradient id="cg" x1="0" y1="0" x2="0" y2="1">
<stop offset="0" stop-color="#df5c16"/><stop offset=".4" stop-color="#d24c10"/><stop offset=".56" stop-color="#b53c0e"/><stop offset=".66" stop-color="#4a1d0f"/><stop offset=".74" stop-color="#1b100c"/><stop offset="1" stop-color="#130c0a"/>
</linearGradient>
<radialGradient id="cs" cx="49.5" cy="43" r="15" gradientUnits="userSpaceOnUse"><stop offset="0" stop-color="#ffdc46"/><stop offset=".35" stop-color="#fba51c" stop-opacity=".9"/><stop offset="1" stop-color="#e2560f" stop-opacity="0"/></radialGradient>
<filter id="cb" x="-20%" y="-20%" width="140%" height="140%"><feGaussianBlur stdDeviation="1.6"/></filter>
<filter id="cb2" x="-20%" y="-20%" width="140%" height="140%"><feGaussianBlur stdDeviation="0.9"/></filter>
<clipPath id="cc"><rect x="8" y="37.4" width="86.8" height="60.5"/></clipPath>
</defs>
<rect width="105.6" height="105" fill="#fcfafb"/>
<rect x="2.2" y=".4" width="11.8" height="10.3" fill="#2c3f94"/>
<rect x="3.4" y="5.4" width="9.4" height="2" fill="#9aaae0"/>
<rect x="3.4" y="2" width="9.4" height="1" fill="#5668b8"/>
<g font-family="Liberation Serif,serif" text-anchor="middle">
<text x="51.4" y="8.6" font-weight="bold" font-size="6.5" fill="#d5722e" textLength="30.5" lengthAdjust="spacingAndGlyphs">BRITTEN</text>
<text x="51.6" y="16" font-weight="bold" font-size="4.8" fill="#4c4444" textLength="38" lengthAdjust="spacingAndGlyphs">Violin Concerto</text>
<text x="51.2" y="21.4" font-size="3.8" fill="#7a7272" textLength="53" lengthAdjust="spacingAndGlyphs">Canadian Carnival • Mont Juic</text>
<text x="51.6" y="28.5" font-weight="bold" font-size="4.6" fill="#d5662c" textLength="48" lengthAdjust="spacingAndGlyphs">Lorraine McAslan, Violin</text>
<text x="51.6" y="33.6" font-size="3.6" fill="#dd8a58" textLength="83" lengthAdjust="spacingAndGlyphs">English Chamber Orchestra • Steuart Bedford</text>
</g>
<g clip-path="url(#cc)">
<rect x="8" y="37.4" width="86.8" height="60.5" fill="url(#cg)"/>
<rect x="8" y="37.4" width="86.8" height="60.5" fill="url(#cs)"/>
<path d="M47 44 L55 50 L58 60 L54 60 L50 52 Z" fill="#f8a020" opacity=".55" filter="url(#cb2)"/>
<g filter="url(#cb)">
<path d="M58 37 L96 37 L96 76 L62 76 L66 66 L58 60 L62 52 L56 46 Z" fill="#40190f" opacity=".93"/>
<path d="M60 57 L68 58 L74 66 L72 72 L66 66 Z" fill="#e2561a" opacity=".9"/>
<path d="M78 56 L92 60 L93 66 L82 62 Z" fill="#c84a18" opacity=".85"/>
<path d="M82 44 L94 42 L95 48 L86 49 Z" fill="#8a3214" opacity=".8"/>
<path d="M6 78 L14 74 L22 77 L30 73 L40 75 L48 70 L58 72 L66 68 L76 70 L86 66 L97 68 L97 100 L6 100 Z" fill="#160e0b"/>
</g>
</g>
</svg>
<div class="t " style="left:1420.00px;top:882.00px;letter-spacing:0.133px;">1409x1409</div>
<div class="hline" style="left:0.00px;top:1065.50px;width:1530.00px;height:1.00px;background:#54585c"></div>
<div class="hline" style="left:0.00px;top:1095.00px;width:1530.00px;height:1.00px;background:rgba(42,46,50,.55)"></div>
<div class="t " style="left:3.00px;top:1072.00px;letter-spacing:0.072px;">6 files, 1 selected</div>
</div>
</body>
</html>
